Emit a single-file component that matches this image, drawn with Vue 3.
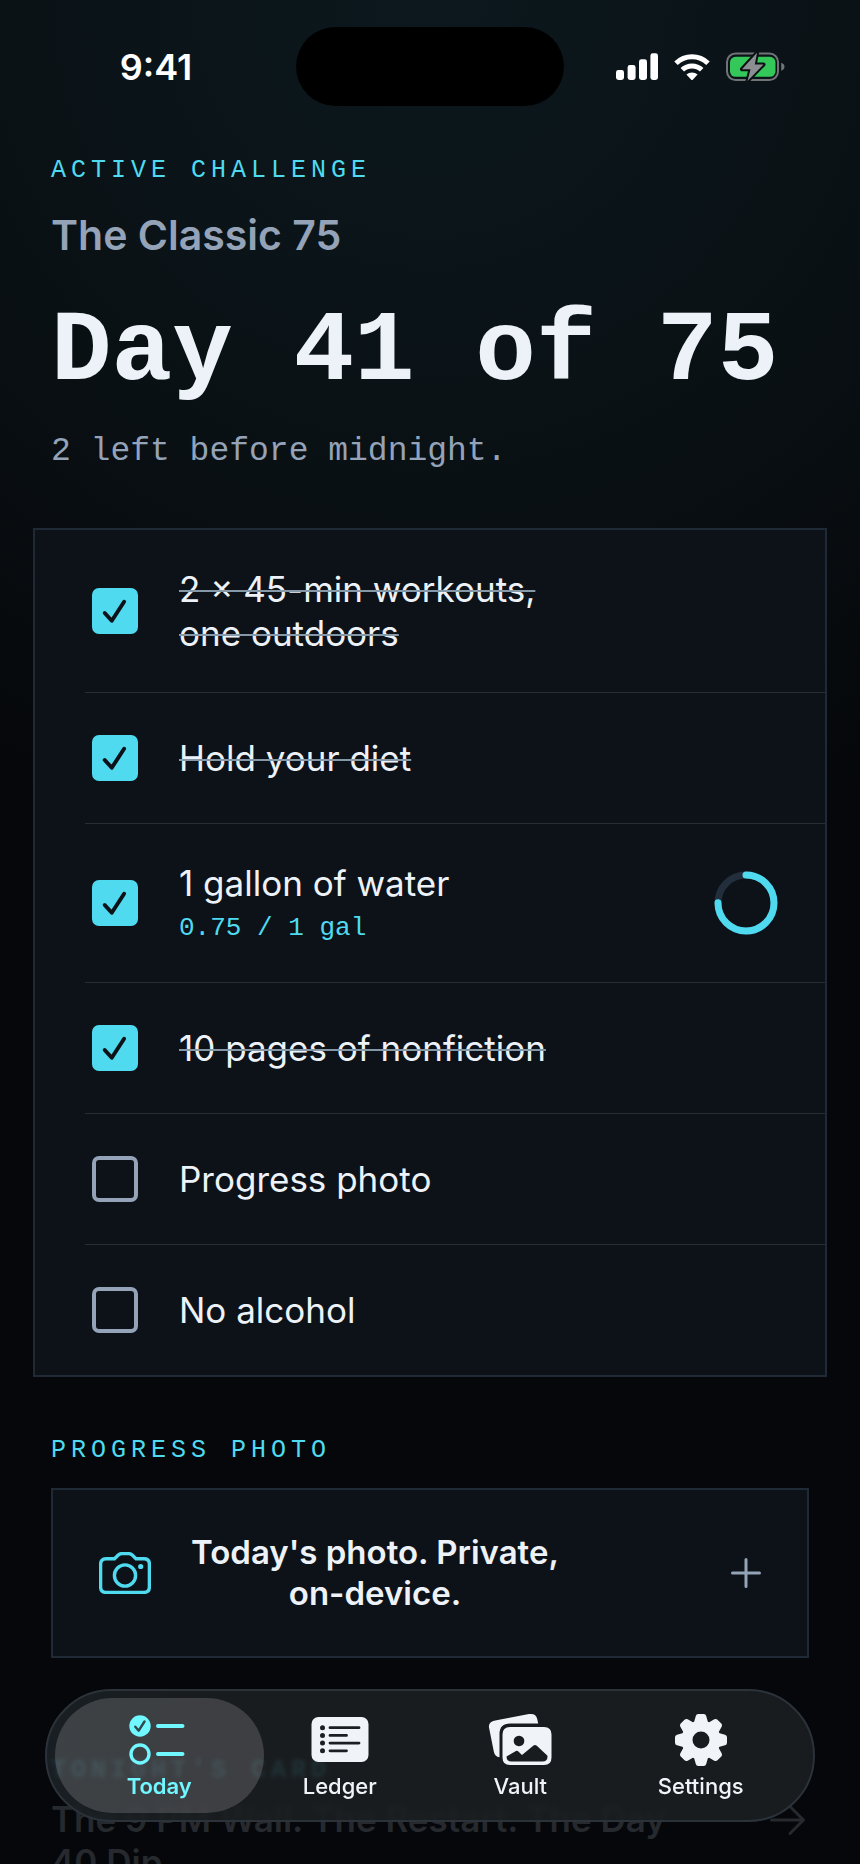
<script setup>
import { ref } from 'vue'

const tasks = ref([
  { id: 'workouts', title: '2 × 45-min workouts, one outdoors', done: true, struck: true },
  { id: 'diet', title: 'Hold your diet', done: true, struck: true },
  { id: 'water', title: '1 gallon of water', done: true, struck: false, note: '0.75 / 1 gal', progress: 0.75 },
  { id: 'pages', title: '10 pages of nonfiction', done: true, struck: true },
  { id: 'photo', title: 'Progress photo', done: false, struck: false },
  { id: 'alcohol', title: 'No alcohol', done: false, struck: false },
])

const ringLength = 2 * Math.PI * 28
</script>

<template>
  <div class="screen">
    <header class="status">
      <time class="clock">9:41</time>
      <span class="island"></span>
      <span class="indicators">
        <svg width="42" height="28" viewBox="0 0 42 28" fill="#fff" aria-label="Signal">
          <rect x="0" y="17" width="8" height="10" rx="2.4" />
          <rect x="11.6" y="12" width="8" height="15" rx="2.4" />
          <rect x="23" y="6.300" width="8" height="20.700" rx="2.4" />
          <rect x="34.400" y="0.300" width="7.600" height="26.700" rx="2.4" />
        </svg>
        <svg width="36" height="28" viewBox="0 0 36 28" aria-label="Wi-Fi">
          <g fill="none" stroke="#fff" stroke-width="5">
            <path d="M2 10.300a23 23 0 0 1 32 0" />
            <path d="M8.300 16.800a14 14 0 0 1 19.400 0" />
          </g>
          <path d="M12.400 21.600a8.400 8.400 0 0 1 11.200 0L19 26.400q-1 1-2 0z" fill="#fff" />
        </svg>
        <svg width="59" height="30" viewBox="0 0 59 30" aria-label="Battery charging">
          <rect x="1" y="1.500" width="51" height="26.500" rx="8.500" fill="none" stroke="#707477" stroke-width="2" />
          <path d="M55.200 10.800q3.300 1.200 3.300 4t-3.300 4z" fill="#707477" />
          <rect x="4" y="4.800" width="45.500" height="20" rx="5.500" fill="#34c759" />
          <path
            d="M31 .8L16 17.200h8.500L21.500 29 37.500 12.500h-8.700z"
            fill="#8b8f92" stroke="#0a1013" stroke-width="4" stroke-linejoin="round" paint-order="stroke"
          />
        </svg>
      </span>
    </header>

    <main>
      <section class="intro">
        <p class="caption">ACTIVE CHALLENGE</p>
        <h2 class="name">The Classic 75</h2>
        <h1 class="day">Day 41 of 75</h1>
        <p class="left">2 left before midnight.</p>
      </section>

      <ul class="tasks">
        <li v-for="task in tasks" :key="task.id">
          <label class="task">
            <span class="box">
              <input v-model="task.done" type="checkbox" />
              <svg v-if="task.done" viewBox="0 0 47 47" aria-hidden="true">
                <path d="M13 25.500l7.200 8L32.800 14" />
              </svg>
            </span>
            <span class="words">
              <span class="title" :class="{ struck: task.struck }">{{ task.title }}</span>
              <span v-if="task.note" class="note">{{ task.note }}</span>
            </span>
            <svg v-if="task.progress" class="ring" viewBox="0 0 64 64" aria-hidden="true">
              <circle cx="32" cy="32" r="28" stroke="#222e3c" />
              <circle
                cx="32" cy="32" r="28" stroke="#4fdaf0" stroke-linecap="round"
                :stroke-dasharray="`${ringLength * task.progress} ${ringLength}`"
                transform="rotate(-90 32 32)"
              />
            </svg>
          </label>
        </li>
      </ul>

      <section class="photo">
        <p class="caption">PROGRESS PHOTO</p>
        <button class="photo-card" type="button">
          <svg class="camera" viewBox="0 0 52 42" aria-hidden="true">
            <path d="M7 6.800h8.500l4-4Q21 1.600 23 1.600h6.500q2 0 3.500 1.200l4 4H45q5.400 0 5.400 5.400V35q0 5.400-5.400 5.400H7q-5.400 0-5.400-5.400V12.200Q1.600 6.800 7 6.800z" />
            <circle cx="26" cy="23.500" r="10.600" />
            <circle class="dot" cx="41.700" cy="14.500" r="2.600" />
          </svg>
          <span class="photo-text">Today's photo. Private, on-device.</span>
          <svg class="plus" viewBox="0 0 30 30" aria-hidden="true"><path d="M15 1.500v27M1.500 15h27" /></svg>
        </button>
      </section>

      <section class="tonight">
        <p class="caption faded">TONIGHT'S CARD</p>
        <a class="story" href="#story">
          <span>The 9 PM Wall. The Restart. The Day 40 Dip</span>
          <svg viewBox="0 0 36 32" aria-hidden="true"><path d="M1.500 16h32M20 2.500L33.500 16 20 29.500" /></svg>
        </a>
      </section>
    </main>

    <nav class="tabs">
      <a class="tab current" href="#today" aria-current="page">
        <svg width="60" height="52" viewBox="0 0 60 52" aria-hidden="true">
          <circle cx="11" cy="12" r="10.700" fill="#70f7ff" />
          <path d="M6.300 12.700l3.400 4L15.500 7.500" fill="none" stroke="#33474b" stroke-width="2.400" stroke-linecap="round" stroke-linejoin="round" />
          <circle cx="11" cy="40" r="9" fill="none" stroke="#70f7ff" stroke-width="3.400" />
          <path d="M29 12h24.500M29 40h24.500" stroke="#70f7ff" stroke-width="4" stroke-linecap="round" />
        </svg>
        <span>Today</span>
      </a>
      <a class="tab" href="#ledger">
        <svg width="58" height="52" viewBox="0 0 58 52" aria-hidden="true">
          <rect x=".5" y="3" width="57" height="45" rx="7" fill="#f0f4f8" />
          <g fill="#1b1f21">
            <circle cx="11.500" cy="13.700" r="2.500" /><circle cx="11.500" cy="21.400" r="2.500" />
            <circle cx="11.500" cy="29.100" r="2.500" /><circle cx="11.500" cy="36.800" r="2.500" />
          </g>
          <path d="M19 13.700h29M19 21.400h16.500M19 29.100h29M19 36.800h16.500" stroke="#1b1f21" stroke-width="2.800" stroke-linecap="round" />
        </svg>
        <span>Ledger</span>
      </a>
      <a class="tab" href="#vault">
        <svg width="64" height="54" viewBox="0 0 64 54" aria-hidden="true">
          <path d="M8.500 7.200L41 1.100q7-1.200 8.300 5.200l.9 4.200H22q-10.500 0-10.500 10.500v23.300q-4.700-.8-5.700-5.800L1 14.500q-.9-6.200 7.500-7.300z" fill="#f0f4f8" />
          <path fill-rule="evenodd" d="M22 14h34q7.500 0 7.500 7.500v23q0 7.500-7.500 7.500H22q-7.500 0-7.500-7.500v-23Q14.500 14 22 14zM31 22.700a5.300 5.300 0 1 0 .01 0zM18.500 43.500q0 5 5 5h31q5 0 5-5v-.8L48.800 32.800q-1.800-1.600-3.600 0L34 42l-3.600-3.600q-1.600-1.400-3.300 0z" fill="#f0f4f8" />
        </svg>
        <span>Vault</span>
      </a>
      <a class="tab" href="#settings">
        <svg width="54" height="54" viewBox="-27 -27 54 54" aria-hidden="true">
          <g fill="#f0f4f8">
            <path
              v-for="n in 8" :key="n" :transform="`rotate(${n * 45})`"
              d="M-7.500-16L-5.200-24q.5-2 2.500-2h5.400q2 0 2.500 2L7.500-16z"
            />
          </g>
          <circle r="14" fill="none" stroke="#f0f4f8" stroke-width="11" />
        </svg>
        <span>Settings</span>
      </a>
    </nav>
  </div>
</template>

<style>
html,
body {
  background: #05070b;
}
</style>

<style scoped>
* {
  box-sizing: border-box;
}

.screen {
  height: 100vh;
  overflow: hidden;
  background: radial-gradient(circle 900px at 50% 0, #0c181e 0, #0a1216 45%, #070a0d 85%, #05070b 100%);
  color: #edf2f9;
  font-family: Inter, 'Liberation Sans', sans-serif;
}

p,
h1,
h2,
ul {
  margin: 0;
  padding: 0;
}

svg {
  display: block;
  flex: none;
}

.status {
  display: grid;
  grid-template-columns: 1fr 268px 1fr;
  align-items: center;
  padding-top: 27px;
}

.clock {
  padding-left: 16px;
  color: #fff;
  font-size: 36px;
  font-weight: 600;
  text-align: center;
}

.island {
  height: 79px;
  border-radius: 40px;
  background: #000;
}

.indicators {
  display: flex;
  align-items: center;
  justify-content: center;
  gap: 16px;
  padding-right: 24px;
}

.intro {
  padding: 50px 51px 0;
}

.caption {
  color: #4fdaf0;
  font: 25px/30px 'Liberation Mono', monospace;
  letter-spacing: 5px;
}

.name {
  margin-top: 24px;
  color: #94a3b8;
  font-size: 41px;
  line-height: 50px;
  font-weight: 600;
}

.day {
  margin-top: 34px;
  font: bold 101px/116px 'Liberation Mono', monospace;
  white-space: nowrap;
}

.left {
  margin-top: 23px;
  color: #94a3b8;
  font: 33px/38px 'Liberation Mono', monospace;
}

.tasks {
  margin: 57px 33px 0;
  padding-left: 50px;
  border: 2px solid #1f2a36;
  background: #0d1218;
  list-style: none;
}

.tasks li + li {
  border-top: 1px solid #272d34;
}

.task {
  display: flex;
  align-items: center;
  gap: 41px;
  min-height: 130px;
  padding: 37px 47px 37px 7px;
}

.box {
  display: grid;
  flex: none;
  width: 46px;
  height: 46px;
}

.box > * {
  grid-area: 1 / 1;
}

.box input {
  width: 100%;
  height: 100%;
  margin: 0;
  border: 4px solid #94a3b8;
  border-radius: 7px;
  appearance: none;
}

.box input:checked {
  border-color: #4fdaf0;
  background: #4fdaf0;
}

.box svg {
  fill: none;
  stroke: #0d1218;
  stroke-width: 4;
  stroke-linecap: round;
  stroke-linejoin: round;
  pointer-events: none;
}

.words {
  display: flex;
  flex: 1;
  flex-direction: column;
  align-items: flex-start;
  gap: 6px;
}

.title {
  max-width: 380px;
  font-size: 35px;
  line-height: 44px;
}

.struck {
  text-decoration: line-through 2px #8598a8;
}

.note {
  color: #4fdaf0;
  font: 26px/34px 'Liberation Mono', monospace;
}

.ring {
  width: 64px;
  height: 64px;
  fill: none;
  stroke-width: 7;
}

.photo {
  padding: 59px 51px 0;
}

.photo-card {
  display: flex;
  align-items: center;
  width: 100%;
  margin-top: 22px;
  padding: 42px 46px;
  border: 2px solid #1f2a36;
  border-radius: 0;
  background: #0d1218;
  color: inherit;
  font: 600 33px/41px Inter, 'Liberation Sans', sans-serif;
  text-align: center;
}

.camera {
  width: 52px;
  height: 42px;
  fill: none;
  stroke: #4fdaf0;
  stroke-width: 3.4;
}

.camera .dot {
  fill: #4fdaf0;
  stroke: none;
}

.photo-text {
  width: 380px;
  margin-left: 34px;
}

.plus {
  width: 30px;
  height: 30px;
  margin-left: auto;
  stroke: #94a3b8;
  stroke-width: 3;
  stroke-linecap: round;
}

.tonight {
  padding: 98px 51px 0;
}

.faded {
  font-weight: bold;
}

.story {
  display: flex;
  justify-content: space-between;
  margin-top: 12px;
  color: #26292d;
  font-size: 35px;
  font-weight: 600;
  line-height: 43px;
  text-decoration: none;
}

.story span {
  max-width: 640px;
}

.story svg {
  width: 36px;
  height: 32px;
  margin: 6px 3px 0 0;
  fill: none;
  stroke: #26292d;
  stroke-width: 3;
  stroke-linecap: round;
  stroke-linejoin: round;
}

.tabs {
  position: fixed;
  right: 45px;
  bottom: 42px;
  left: 45px;
  display: flex;
  height: 133px;
  padding: 0 22px;
  border: 2px solid #2b323a;
  border-radius: 67px;
  background: linear-gradient(90deg, rgb(27 34 38 / 90%), rgb(27 31 33 / 90%) 18%);
  backdrop-filter: blur(2px);
}

.tab {
  position: relative;
  display: flex;
  flex: 1;
  flex-direction: column;
  align-items: center;
  padding-top: 22px;
  color: #f0f4f8;
  font-size: 22px;
  font-weight: 500;
  line-height: 26px;
  text-decoration: none;
}

.tab svg {
  z-index: 1;
  height: 54px;
}

.tab span {
  z-index: 1;
  margin-top: 6px;
}

.current {
  color: #70f7ff;
  font-weight: 600;
}

.current::before {
  position: absolute;
  inset: 7px -14px;
  border-radius: 58px;
  background: rgb(255 250 255 / 16%);
  content: '';
}
</style>
